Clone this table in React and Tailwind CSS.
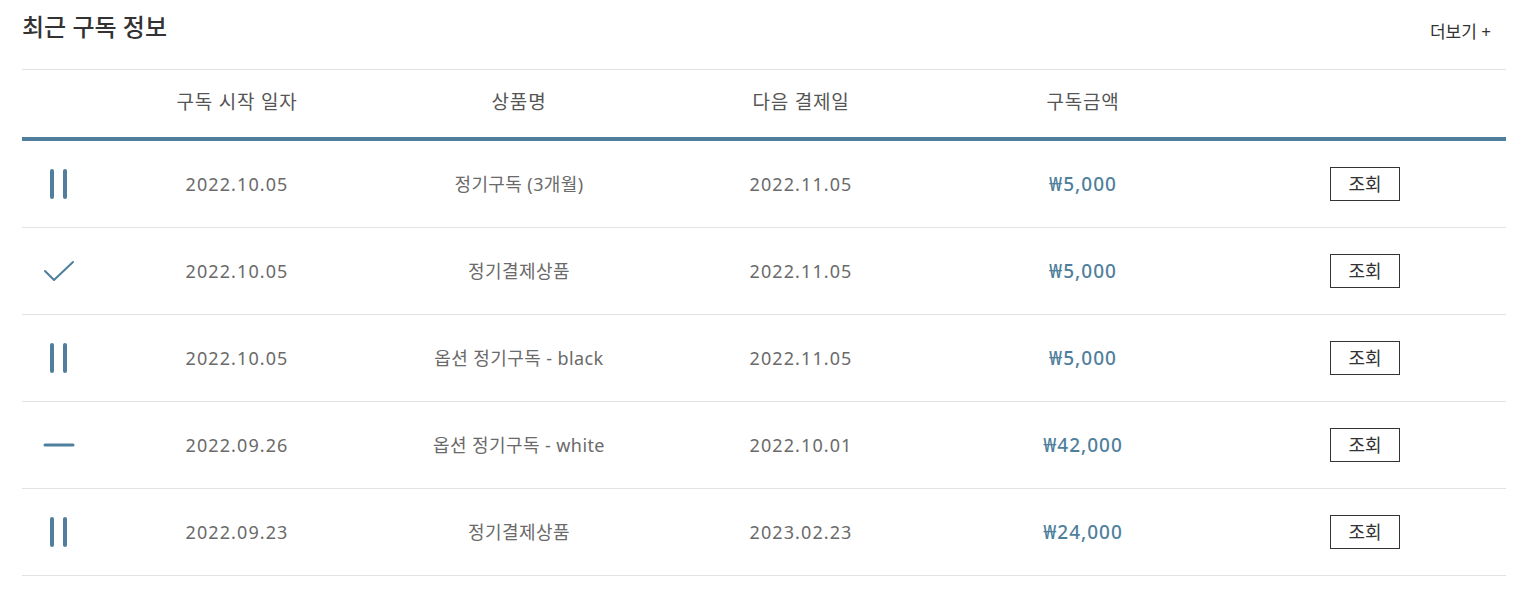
import React from 'react';

const rows = [
  { status: 'pause', start: '2022.10.05', name: '정기구독 (3개월)', next: '2022.11.05', price: '₩5,000' },
  { status: 'done', start: '2022.10.05', name: '정기결제상품', next: '2022.11.05', price: '₩5,000' },
  { status: 'pause', start: '2022.10.05', name: '옵션 정기구독 - black', next: '2022.11.05', price: '₩5,000' },
  { status: 'stop', start: '2022.09.26', name: '옵션 정기구독 - white', next: '2022.10.01', price: '₩42,000' },
  { status: 'pause', start: '2022.09.23', name: '정기결제상품', next: '2023.02.23', price: '₩24,000' },
];

const StatusIcon = ({ type }) => {
  if (type === 'pause') {
    return (
      <svg width="30" height="32" viewBox="0 0 30 32" fill="none" stroke="#4f7f9c" strokeWidth="4" strokeLinecap="round">
        <line x1="8" y1="3" x2="8" y2="29" />
        <line x1="21" y1="3" x2="21" y2="29" />
      </svg>
    );
  }
  if (type === 'done') {
    return (
      <svg width="32" height="24" viewBox="0 0 32 24" fill="none" stroke="#4f7f9c" strokeWidth="2" strokeLinecap="round" strokeLinejoin="round">
        <polyline points="2,12 11,21 30,3" />
      </svg>
    );
  }
  return (
    <svg width="32" height="8" viewBox="0 0 32 8" fill="none" stroke="#4f7f9c" strokeWidth="3" strokeLinecap="round">
      <line x1="2" y1="4" x2="30" y2="4" />
    </svg>
  );
};

const App = () => {
  return (
    <div className="min-h-screen bg-white pl-[22px] pr-[30px]" style={{ fontFamily: '"Noto Sans", "Noto Sans CJK KR", sans-serif' }}>
      <div className="flex h-[69px] items-start justify-between">
        <h2 className="mt-[8px] text-[24px] font-medium leading-[38px] text-[#333]">최근 구독 정보</h2>
        <a className="mr-[15px] mt-[18px] text-[17px] leading-[28px] text-[#333]">더보기 +</a>
      </div>

      <div className="border-t border-[#e2e2e2]">
        <div className="grid h-[71px] grid-cols-[74px_repeat(5,1fr)] items-center border-b-4 border-[#4f7f9c] pb-[2px] text-[19px] tracking-[0.8px] text-[#555]">
          <div />
          <div className="text-center">구독 시작 일자</div>
          <div className="text-center">상품명</div>
          <div className="text-center">다음 결제일</div>
          <div className="text-center">구독금액</div>
          <div />
        </div>

        {rows.map((r, i) => (
          <div key={i} className="grid h-[87px] grid-cols-[74px_repeat(5,1fr)] items-center border-b border-[#e2e2e2] text-[18px] text-[#6a6a6a]">
            <div className="flex justify-center">
              <StatusIcon type={r.status} />
            </div>
            <div className="text-center tracking-[1.1px]">{r.start}</div>
            <div className="text-center tracking-[0.4px]">{r.name}</div>
            <div className="text-center tracking-[1.1px]">{r.next}</div>
            <div className="text-center text-[19px] font-medium tracking-[1px] text-[#4f7f9c]">{r.price}</div>
            <div className="flex justify-center">
              <button className="h-[34px] w-[70px] border-[1.5px] border-[#333] bg-white text-[18px] leading-none text-[#333]">조회</button>
            </div>
          </div>
        ))}
      </div>
    </div>
  );
};

export default App;
